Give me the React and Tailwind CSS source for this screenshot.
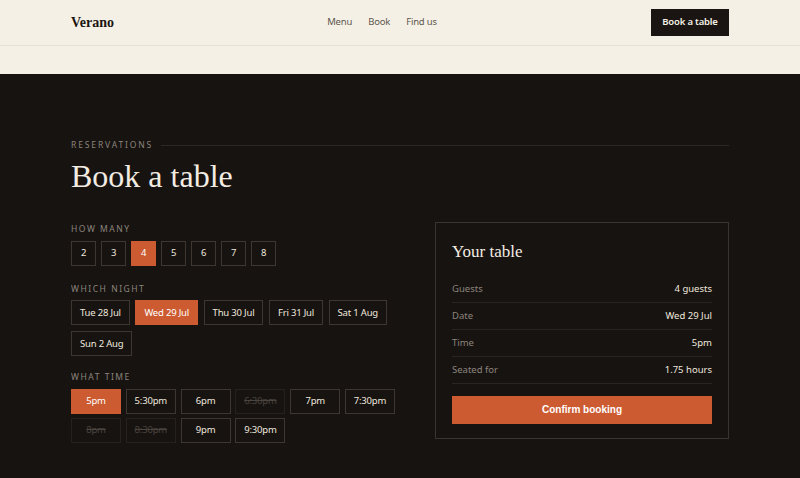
const GUESTS = [2, 3, 4, 5, 6, 7, 8]
const NIGHTS = ['Tue 28 Jul', 'Wed 29 Jul', 'Thu 30 Jul', 'Fri 31 Jul', 'Sat 1 Aug', 'Sun 2 Aug']
const TIMES = [
  { t: '5pm' },
  { t: '5:30pm' },
  { t: '6pm' },
  { t: '6:30pm', off: true },
  { t: '7pm' },
  { t: '7:30pm' },
  { t: '8pm', off: true },
  { t: '8:30pm', off: true },
  { t: '9pm' },
  { t: '9:30pm' },
]

const SANS = { fontFamily: '"Noto Sans", "Open Sans", sans-serif' }

function Label({ children }) {
  return <div className="text-[8.5px] tracking-[0.18em] uppercase text-[#8c847c] mb-[5px]">{children}</div>
}

function Chip({ active, off, className = '', children }) {
  let cls = 'border-[#3d3631] text-[#efe8de] bg-transparent'
  if (active) cls = 'border-[#cd5b32] bg-[#cd5b32] text-white'
  if (off) cls = 'border-[#27211e] text-[#4a433e] line-through'
  return (
    <button className={`h-[25px] border flex items-center justify-center text-[9.5px] tracking-[-0.02em] ${cls} ${className}`}>
      {children}
    </button>
  )
}

export default function App() {
  const rows = [
    ['Guests', '4 guests'],
    ['Date', 'Wed 29 Jul'],
    ['Time', '5pm'],
    ['Seated for', '1.75 hours'],
  ]
  return (
    <div className="w-[800px] h-[478px] overflow-hidden bg-[#171311]" style={SANS}>
      <div className="bg-[#f5f0e6] h-[74px]">
        <header className="h-[46px] border-b border-[#e7e0d3] px-[71px] flex items-center justify-between">
          <div className="w-[150px] text-[14px] font-bold text-[#1b1512]" style={{ fontFamily: '"Liberation Serif", serif' }}>
            Verano
          </div>
          <nav className="flex gap-[16px] text-[9.5px] tracking-[-0.02em] text-[#5e5750] mr-[36px]">
            <span>Menu</span>
            <span>Book</span>
            <span>Find us</span>
          </nav>
          <div className="w-[150px] flex justify-end">
            <button className="h-[27px] w-[78px] bg-[#1a1512] text-[#f5f0e6] text-[9.5px] tracking-[-0.02em] font-semibold">Book a table</button>
          </div>
        </header>
      </div>

      <main className="px-[71px] pt-[65px]">
        <div className="flex items-center gap-[8px]">
          <span className="text-[8.5px] tracking-[0.22em] text-[#8c847c]">RESERVATIONS</span>
          <div className="flex-1 h-px bg-[#2e2825]" />
        </div>
        <h1 className="mt-[4px] text-[32px] leading-[40px] text-[#f3ece2]" style={{ fontFamily: '"Liberation Serif", serif' }}>
          Book a table
        </h1>

        <div className="flex justify-between mt-[27px]">
          <div className="w-[340px]">
            <Label>How many</Label>
            <div className="flex gap-[5px]">
              {GUESTS.map(g => (
                <Chip key={g} active={g === 4} className="w-[25px]">{g}</Chip>
              ))}
            </div>

            <div className="mt-[17px]">
              <Label>Which night</Label>
              <div className="flex flex-wrap gap-x-[5.5px] gap-y-[6px] w-[340px]">
                {NIGHTS.map(n => (
                  <Chip key={n} active={n === 'Wed 29 Jul'} className="px-[8px]">{n}</Chip>
                ))}
              </div>
            </div>

            <div className="mt-[15px]">
              <Label>What time</Label>
              <div className="grid grid-cols-[repeat(6,50px)] gap-x-[4.8px] gap-y-[4px]">
                {TIMES.map(x => (
                  <Chip key={x.t} active={x.t === '5pm'} off={x.off}>{x.t}</Chip>
                ))}
              </div>
            </div>
          </div>

          <aside className="w-[294px] h-[217px] mt-[-1px] border border-[#3a3430] px-[16px] pt-[17px]">
            <h2 className="text-[17px] leading-[24px] text-[#f3ece2]" style={{ fontFamily: '"Liberation Serif", serif' }}>Your table</h2>
            <div className="mt-[12px]">
              {rows.map(([k, v]) => (
                <div key={k} className="h-[27px] flex items-center justify-between border-b border-[#2a2421] text-[9.5px]">
                  <span className="text-[#8c847c]">{k}</span>
                  <span className="text-[#efe8de]">{v}</span>
                </div>
              ))}
            </div>
            <button
              className="mt-[12px] w-full h-[28px] bg-[#cd5b32] text-white text-[10px] font-bold"
              style={{ fontFamily: '"Liberation Sans", Arial, sans-serif' }}
            >
              Confirm booking
            </button>
          </aside>
        </div>
      </main>
    </div>
  )
}
